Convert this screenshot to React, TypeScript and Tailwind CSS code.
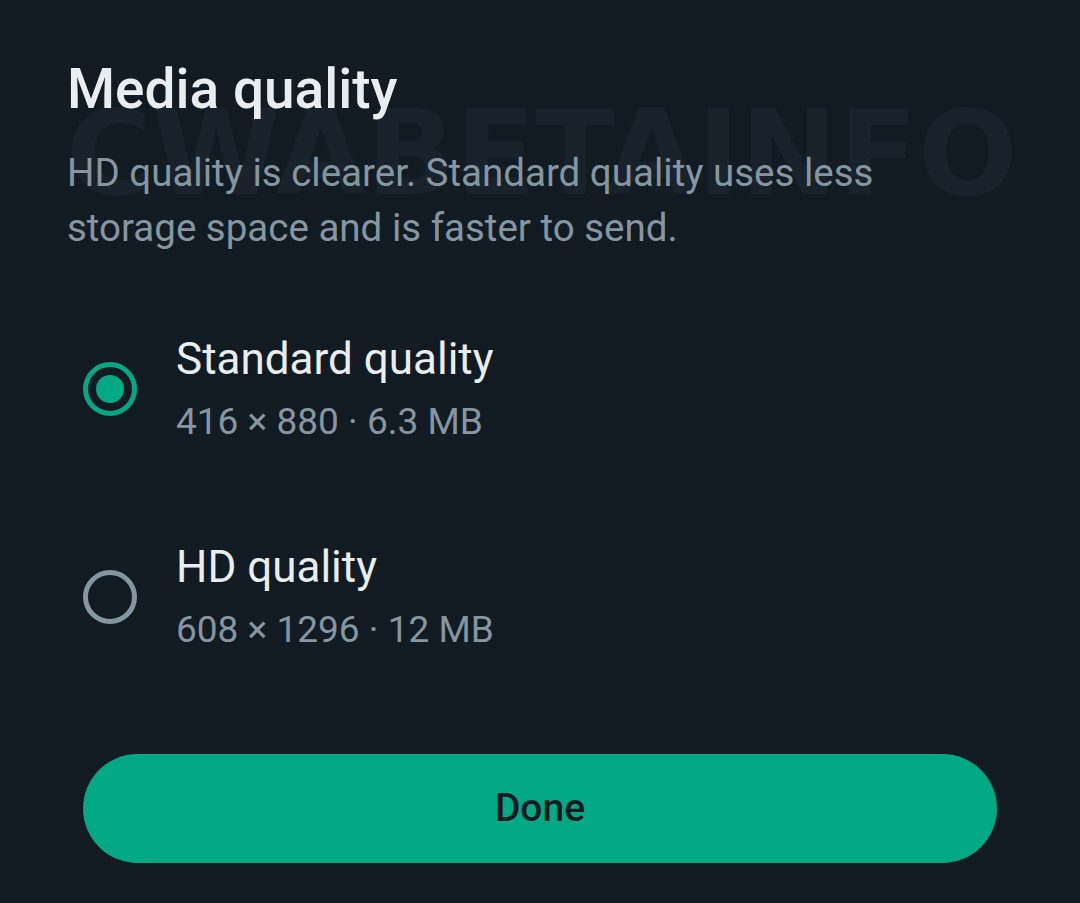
import { useState } from 'react';

const options = [
  { id: 'standard', label: 'Standard quality', detail: '416 × 880 · 6.3 MB' },
  { id: 'hd', label: 'HD quality', detail: '608 × 1296 · 12 MB' },
];

export default function App() {
  const [selected, setSelected] = useState('standard');

  return (
    <main
      className="relative min-h-[903px] w-[1080px] overflow-hidden bg-[#121b22] px-[67px] pt-[57px]"
      style={{ fontFamily: 'Roboto, "Noto Sans", sans-serif' }}
    >
      {/* watermark */}
      <div
        aria-hidden
        className="pointer-events-none absolute left-[66px] top-[96px] select-none text-[117px] font-bold leading-[116px] text-[#19222a]"
        style={{ fontFamily: '"DejaVu Sans", sans-serif' }}
      >
        CWABETAINFO
      </div>

      <div className="relative">
        <h1 className="text-[55px] font-medium leading-[64px] text-[#e9edef]">Media quality</h1>
        <p className="mt-[24px] max-w-[850px] text-[38.5px] leading-[55px] text-[#8696a0]">
          HD quality is clearer. Standard quality uses less storage space and is faster to send.
        </p>

        <div className="mt-[78px] flex flex-col gap-[96px]">
          {options.map((opt) => {
            const active = selected === opt.id;
            return (
              <button
                key={opt.id}
                type="button"
                onClick={() => setSelected(opt.id)}
                className="flex items-center text-left"
              >
                <div className="ml-[16px] flex h-[54px] w-[54px] items-center justify-center">
                  {active ? (
                    <div className="flex h-[54px] w-[54px] items-center justify-center rounded-full border-[5px] border-[#00a884]">
                      <div className="h-[28px] w-[28px] rounded-full bg-[#00a884]" />
                    </div>
                  ) : (
                    <div className="h-[54px] w-[54px] rounded-full border-[5px] border-[#8696a0]" />
                  )}
                </div>
                <div className="ml-[39px] flex flex-col">
                  <span className="text-[44px] leading-[52px] text-[#e9edef]">{opt.label}</span>
                  <span className="mt-[14px] text-[37px] leading-[46px] text-[#8696a0]">{opt.detail}</span>
                </div>
              </button>
            );
          })}
        </div>

        <button
          type="button"
          className="ml-[16px] mt-[101px] flex h-[109px] w-[914px] items-center justify-center rounded-full bg-[#00a884] text-[39px] font-medium text-[#111b21]"
        >
          Done
        </button>
      </div>
    </main>
  );
}
